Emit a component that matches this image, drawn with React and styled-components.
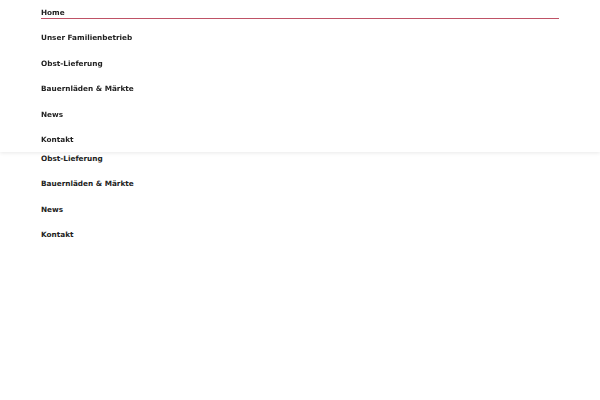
import React from 'react';
import styled, { createGlobalStyle } from 'styled-components';

const GlobalStyle = createGlobalStyle`
    html, body {
        margin: 0;
        padding: 0;
        background: #ffffff;
        font-family: "DejaVu Sans", "Liberation Sans", sans-serif;
    }
`

const items = ['Home', 'Unser Familienbetrieb', 'Obst-Lieferung', 'Bauernläden & Märkte', 'News', 'Kontakt'];

const Page = styled.div`
    padding-top: 95px;
`

const Panel = styled.nav`
    background: #ffffff;
    box-shadow: 0 1px 4px rgba(0, 0, 0, 0.09);
`

const StickyPanel = styled(Panel)`
    position: fixed;
    top: 0;
    left: 0;
    right: 0;
    z-index: 10;
`

const List = styled.ul`
    list-style: none;
    margin: 0;
    padding: 0 41px;
`

const Item = styled.li`
    height: 25.4px;
    box-sizing: border-box;
`

const Link = styled.a`
    display: block;
    padding-top: 7px;
    line-height: 11px;
    font-size: 7.3px;
    font-weight: bold;
    color: #222222;
    text-decoration: none;
    border-bottom: 1px solid ${p => p.$active ? '#bf5266' : 'transparent'};
`

const Menu = ({ active }) => (
    <List>
        {items.map(label => (
            <Item key={label}>
                <Link href="#" $active={label === active}>{label}</Link>
            </Item>
        ))}
    </List>
)

const App = () => {
    return (
        <>
            <GlobalStyle />
            <StickyPanel>
                <Menu active="Home" />
            </StickyPanel>
            <Page>
                <Panel>
                    <Menu />
                </Panel>
            </Page>
        </>
    )
}

export default App;
